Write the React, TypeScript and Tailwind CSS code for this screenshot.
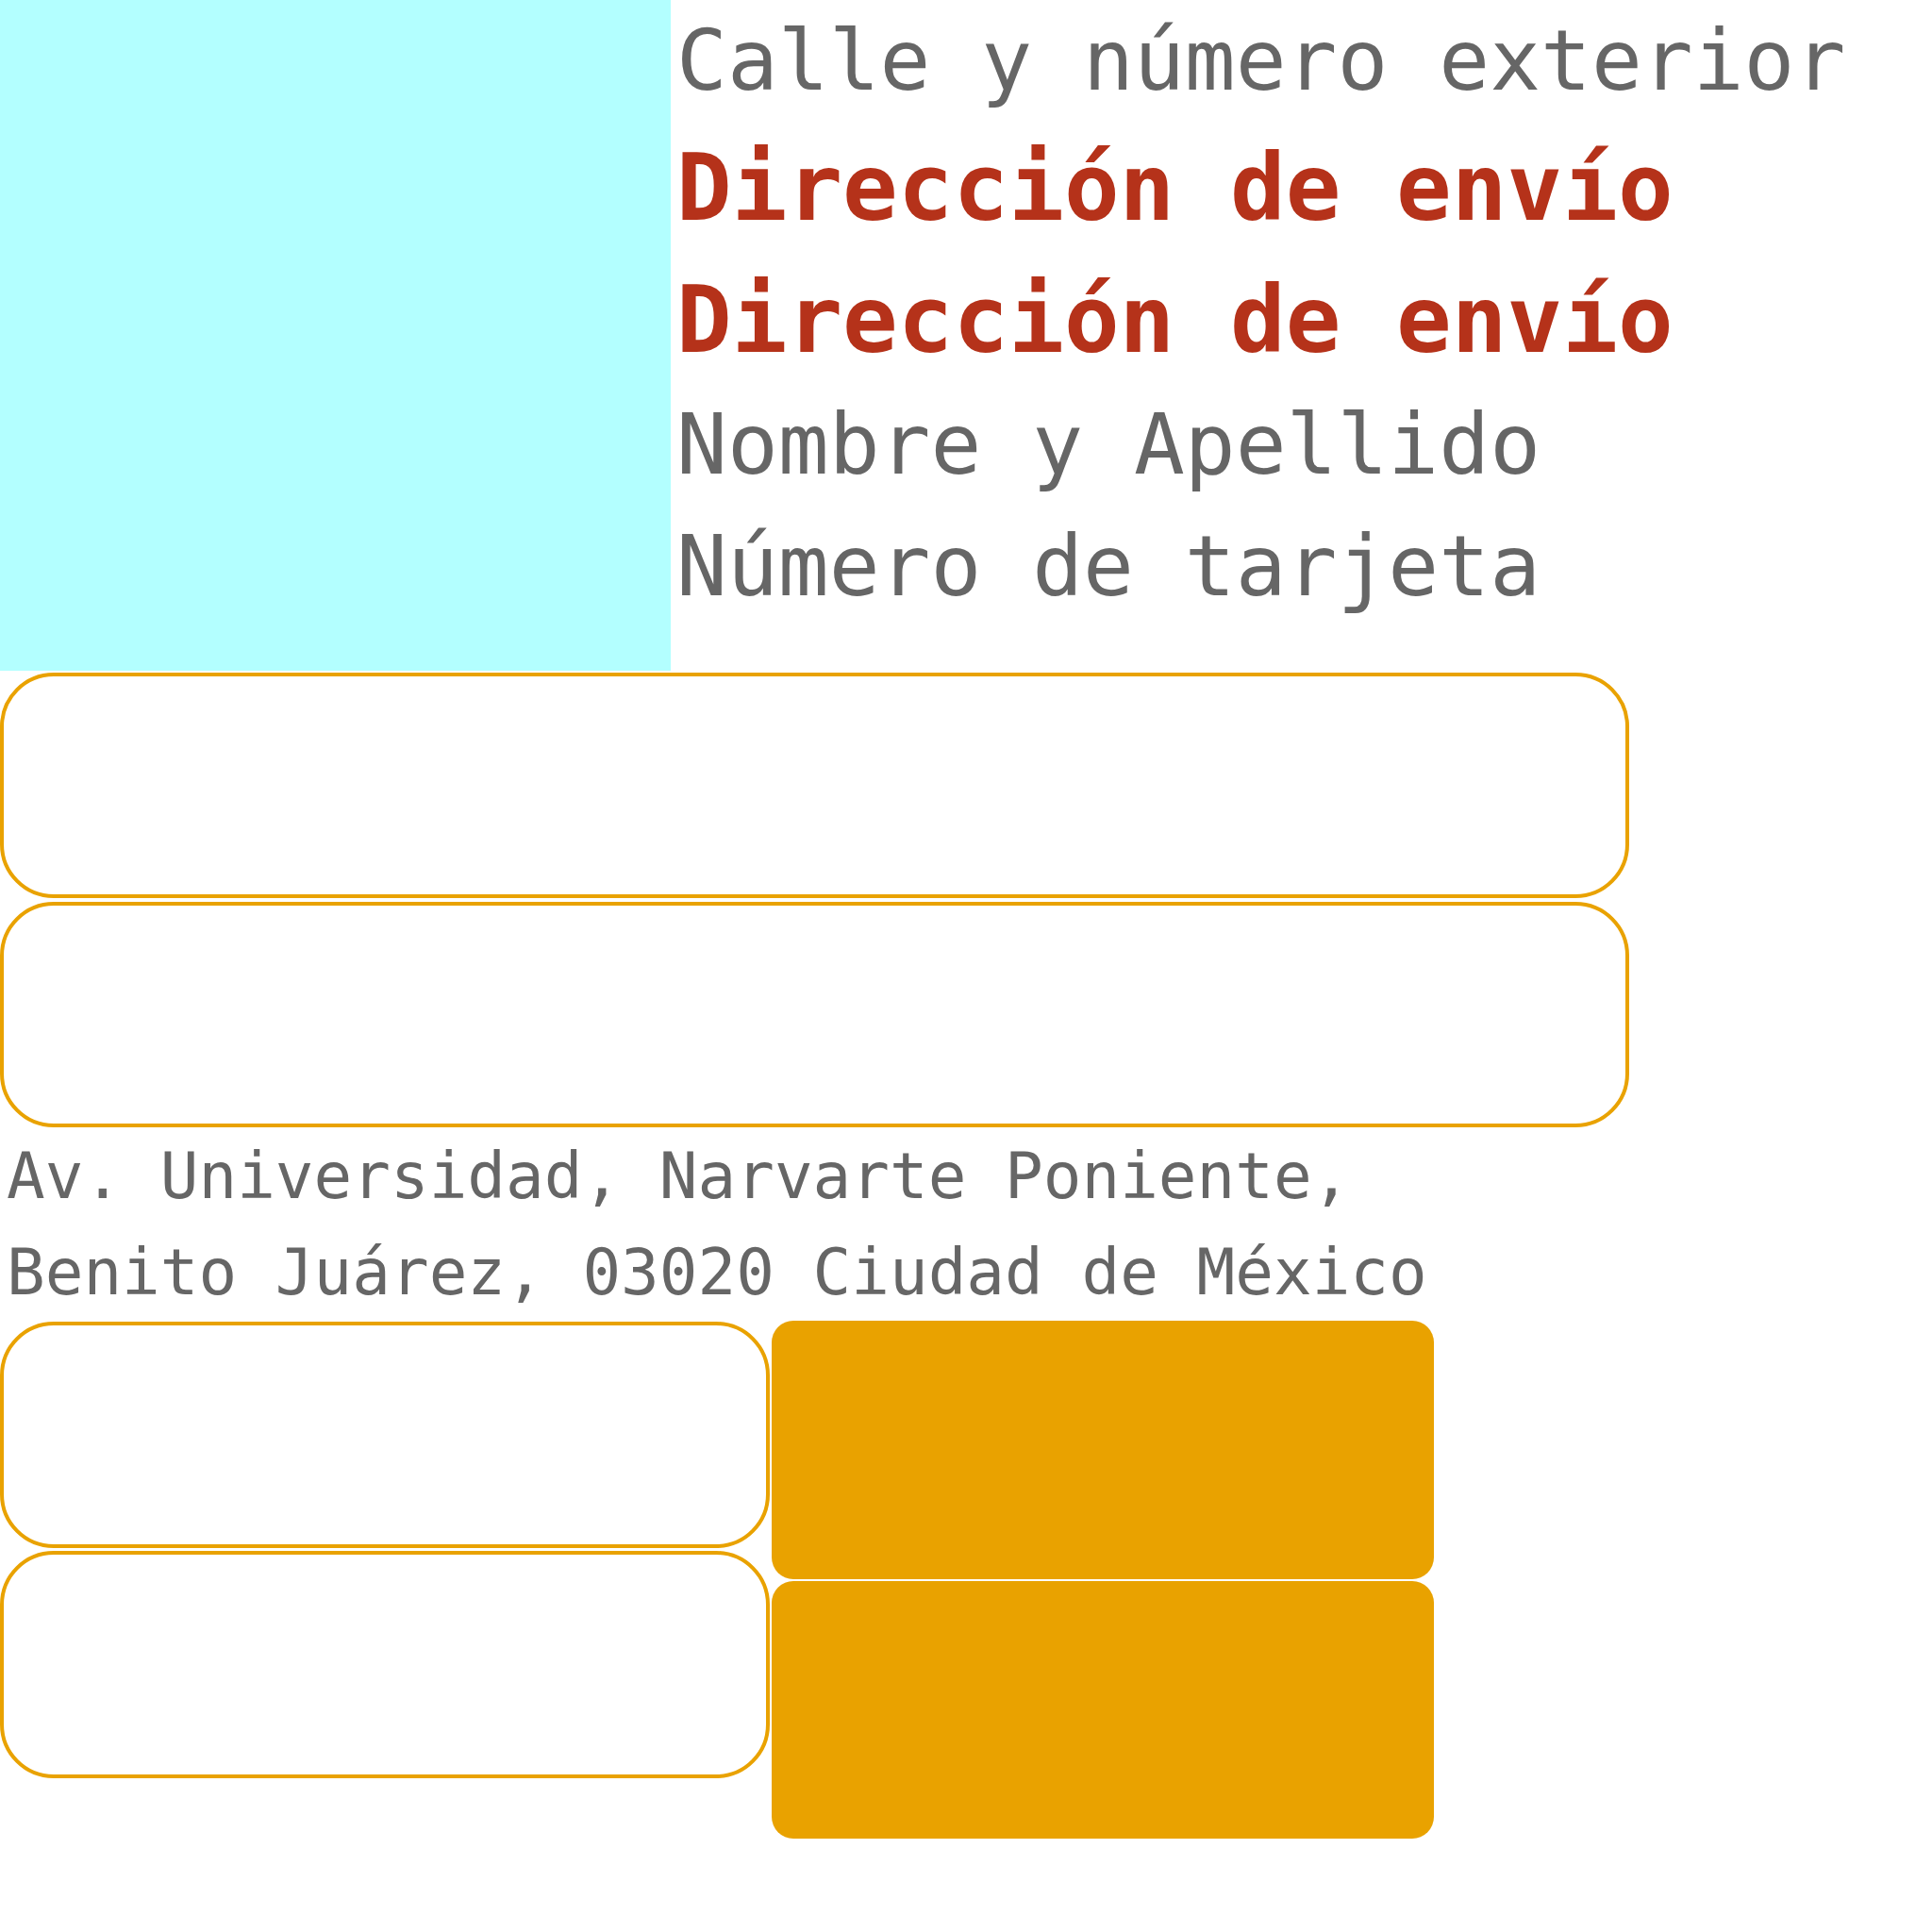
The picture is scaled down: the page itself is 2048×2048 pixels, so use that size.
export default function App() {
  const mono = "font-['DejaVu_Sans_Mono','Liberation_Mono',monospace]"

  return (
    <div className={`w-[2048px] h-[2048px] bg-white ${mono}`}>
      {/* header row */}
      <div className="flex">
        <div className="w-[711px] h-[711px] shrink-0 bg-[#b3ffff]" />
        <div className="pl-[6px] text-[#666666]">
          <div className="text-[89.5px] leading-[129px] whitespace-nowrap">Calle y número exterior</div>
          <div className="text-[97.5px] leading-[140px] font-bold text-[#b5321a] whitespace-nowrap">Dirección de envío</div>
          <div className="text-[97.5px] leading-[140px] font-bold text-[#b5321a] whitespace-nowrap">Dirección de envío</div>
          <div className="text-[89.5px] leading-[129px] -mt-[2px] whitespace-nowrap">Nombre y Apellido</div>
          <div className="text-[89.5px] leading-[129px] whitespace-nowrap">Número de tarjeta</div>
        </div>
      </div>

      {/* input fields */}
      <div className="mt-[2px] flex w-[1727px] flex-col gap-[4px]">
        <div className="h-[239px] rounded-[57px] border-4 border-[#e9a200]" />
        <div className="h-[239px] rounded-[57px] border-4 border-[#e9a200]" />
      </div>

      <div className="mt-[1px] pl-[7px] text-[67.6px] leading-[102px] text-[#666666] whitespace-nowrap">
        <div>Av. Universidad, Narvarte Poniente,</div>
        <div>Benito Juárez, 03020 Ciudad de México</div>
      </div>

      {/* bottom row */}
      <div className="flex gap-[2px]">
        <div className="flex w-[816px] flex-col gap-[3px] pt-[1px]">
          <div className="h-[240px] rounded-[57px] border-4 border-[#e9a200]" />
          <div className="h-[241px] rounded-[57px] border-4 border-[#e9a200]" />
        </div>
        <div className="flex w-[702px] flex-col gap-[2px]">
          <div className="h-[274px] rounded-[23px] bg-[#e9a200]" />
          <div className="h-[273px] rounded-[23px] bg-[#e9a200]" />
        </div>
      </div>
    </div>
  )
}
